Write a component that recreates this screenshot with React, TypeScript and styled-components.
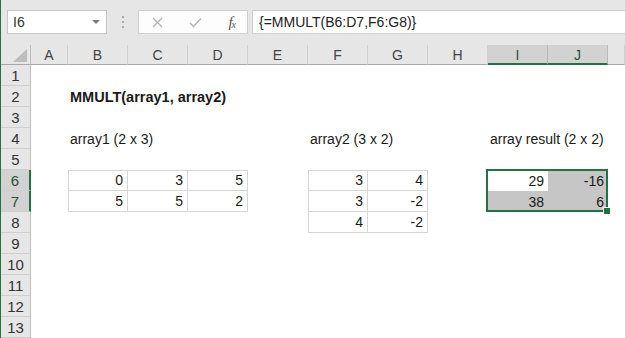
import React from 'react';
import styled, { createGlobalStyle } from 'styled-components';

const GlobalStyle = createGlobalStyle`
  html, body {
    margin: 0;
    padding: 0;
    background: #ffffff;
    overflow: hidden;
  }
  body {
    font-family: 'Liberation Sans', Arial, sans-serif;
  }
`;

const GREEN = '#217346';

const Window = styled.div`
  width: 625px;
  height: 338px;
  box-sizing: border-box;
  border-left: 1px solid ${GREEN};
  display: flex;
  flex-direction: column;
  overflow: hidden;
  background: #ffffff;
`;

const Toolbar = styled.div`
  height: 45px;
  box-sizing: border-box;
  padding: 10px 0 0 6px;
  background: #e6e6e6;
  display: flex;
  align-items: flex-start;
`;

const NameBox = styled.div`
  width: 100px;
  height: 24px;
  box-sizing: border-box;
  border: 1px solid #c6c6c6;
  background: #ffffff;
  display: flex;
  align-items: center;
  justify-content: space-between;
  padding: 0 6px 0 5px;
  font-size: 14px;
  color: #333;
`;

const DropArrow = styled.span`
  width: 0;
  height: 0;
  border-left: 4px solid transparent;
  border-right: 4px solid transparent;
  border-top: 4px solid #7a7a7a;
`;

const Grip = styled.div`
  width: 31px;
  height: 24px;
  display: flex;
  flex-direction: column;
  align-items: center;
  justify-content: center;
  gap: 3px;
  span {
    width: 2px;
    height: 2px;
    background: #a8a8a8;
  }
`;

const FormulaButtons = styled.div`
  width: 110px;
  height: 24px;
  box-sizing: border-box;
  border: 1px solid #d0d0d0;
  background: #fdfdfd;
  display: flex;
  align-items: center;
  justify-content: space-between;
  padding: 0 12px 0 13px;
  margin-right: 4px;
`;

const FxLabel = styled.span`
  font-family: 'Liberation Serif', 'Times New Roman', serif;
  font-style: italic;
  font-size: 15px;
  color: #555;
  letter-spacing: -1px;
  sub {
    font-size: 10px;
    vertical-align: -1px;
  }
`;

const FormulaInput = styled.div`
  flex: 1;
  height: 24px;
  box-sizing: border-box;
  border: 1px solid #d0d0d0;
  border-right: none;
  background: #ffffff;
  display: flex;
  align-items: center;
  padding-left: 6px;
  font-size: 14px;
  color: #222;
`;

const Sheet = styled.div`
  display: grid;
  grid-template-columns: 30px 37px repeat(9, 60px) 1fr;
  grid-template-rows: 20px repeat(13, 21px);
  font-size: 14px;
`;

const Corner = styled.div`
  grid-row: 1;
  grid-column: 1;
  background: #e6e6e6;
  border-right: 1px solid #bdbdbd;
  border-bottom: 1px solid #a8a8a8;
  box-sizing: border-box;
  display: flex;
  align-items: flex-end;
  justify-content: flex-end;
  padding: 0 3px 2px 0;
`;

const ColHeader = styled.div<{ $col: number; $selected?: boolean }>`
  grid-row: 1;
  grid-column: ${(p) => p.$col};
  box-sizing: border-box;
  background: ${(p) => (p.$selected ? '#d2d2d2' : '#e6e6e6')};
  border-right: 1px solid ${(p) => (p.$selected ? '#b8b8b8' : '#cfcfcf')};
  border-bottom: ${(p) => (p.$selected ? `2px solid ${GREEN}` : '1px solid #a8a8a8')};
  display: flex;
  align-items: center;
  justify-content: center;
  padding-top: ${(p) => (p.$selected ? '1px' : '0')};
  color: ${(p) => (p.$selected ? '#2b4f3b' : '#444')};
  font-size: 14px;
`;

const RowHeader = styled.div<{ $row: number; $selected?: boolean }>`
  grid-row: ${(p) => p.$row};
  grid-column: 1;
  box-sizing: border-box;
  background: ${(p) => (p.$selected ? '#d2d2d2' : '#e6e6e6')};
  border-right: ${(p) => (p.$selected ? `2px solid ${GREEN}` : '1px solid #bdbdbd')};
  border-bottom: 1px solid #cfcfcf;
  display: flex;
  align-items: center;
  justify-content: center;
  color: ${(p) => (p.$selected ? '#2b4f3b' : '#333')};
  font-size: 15px;
`;

const Cell = styled.div<{
  $row: number;
  $col: number;
  $align?: 'left' | 'right';
  $bold?: boolean;
  $fill?: boolean;
  $boxed?: boolean;
  $top?: boolean;
  $left?: boolean;
}>`
  grid-row: ${(p) => p.$row};
  grid-column: ${(p) => p.$col};
  box-sizing: border-box;
  display: flex;
  align-items: flex-end;
  justify-content: ${(p) => (p.$align === 'right' ? 'flex-end' : 'flex-start')};
  padding: 0 4px 2px 2px;
  white-space: nowrap;
  overflow: visible;
  color: #1a1a1a;
  font-size: ${(p) => (p.$bold ? '14.5px' : '14px')};
  font-weight: ${(p) => (p.$bold ? 700 : 400)};
  background: ${(p) => (p.$fill ? '#c6c6c6' : 'transparent')};
  border-right: ${(p) => (p.$boxed ? '1px solid #d6d6d6' : 'none')};
  border-bottom: ${(p) => (p.$boxed ? '1px solid #d6d6d6' : 'none')};
  border-top: ${(p) => (p.$top ? '1px solid #d6d6d6' : 'none')};
  border-left: ${(p) => (p.$left ? '1px solid #d6d6d6' : 'none')};
`;

const Selection = styled.div<{ $col: number; $row: number }>`
  grid-column: ${(p) => p.$col} / span 2;
  grid-row: ${(p) => p.$row} / span 2;
  margin: -1px 0 0 -2px;
  border: 2px solid ${GREEN};
  position: relative;
  pointer-events: none;
`;

const FillHandle = styled.span`
  position: absolute;
  right: -5px;
  bottom: -5px;
  width: 6px;
  height: 6px;
  background: ${GREEN};
  border: 1px solid #ffffff;
`;

const COLS = ['A', 'B', 'C', 'D', 'E', 'F', 'G', 'H', 'I', 'J', ''];

type CellData = {
  v: string;
  align?: 'left' | 'right';
  bold?: boolean;
  fill?: boolean;
};

const data: Record<string, CellData> = {
  B2: { v: 'MMULT(array1, array2)', bold: true },
  B4: { v: 'array1 (2 x 3)' },
  F4: { v: 'array2 (3 x 2)' },
  I4: { v: 'array result (2 x 2)' },
  B6: { v: '0', align: 'right' },
  C6: { v: '3', align: 'right' },
  D6: { v: '5', align: 'right' },
  B7: { v: '5', align: 'right' },
  C7: { v: '5', align: 'right' },
  D7: { v: '2', align: 'right' },
  F6: { v: '3', align: 'right' },
  G6: { v: '4', align: 'right' },
  F7: { v: '3', align: 'right' },
  G7: { v: '-2', align: 'right' },
  F8: { v: '4', align: 'right' },
  G8: { v: '-2', align: 'right' },
  I6: { v: '29', align: 'right' },
  J6: { v: '-16', align: 'right', fill: true },
  I7: { v: '38', align: 'right', fill: true },
  J7: { v: '6', align: 'right', fill: true },
};

// bordered ranges: [firstCol, lastCol, firstRow, lastRow]
const boxes: [string, string, number, number][] = [
  ['B', 'D', 6, 7],
  ['F', 'G', 6, 8],
];

const boxInfo = (col: string, row: number) => {
  for (const [c1, c2, r1, r2] of boxes) {
    if (col && col >= c1 && col <= c2 && row >= r1 && row <= r2) {
      return { boxed: true, top: row === r1, left: col === c1 };
    }
  }
  return { boxed: false, top: false, left: false };
};

const CornerMark = () => (
  <svg width="14" height="13" viewBox="0 0 14 13">
    <polygon points="0,13 14,13 14,0" fill="#bdbdbd" />
  </svg>
);

const CrossIcon = () => (
  <svg width="11" height="11" viewBox="0 0 11 11">
    <path d="M1 1 L10 10 M10 1 L1 10" stroke="#b4b4b4" strokeWidth="1.4" fill="none" />
  </svg>
);

const CheckIcon = () => (
  <svg width="13" height="11" viewBox="0 0 13 11">
    <path d="M1 6 L4.5 9.5 L12 1.5" stroke="#b4b4b4" strokeWidth="1.5" fill="none" />
  </svg>
);

export default function App() {
  const rows = Array.from({ length: 13 }, (_, i) => i + 1);
  return (
    <>
      <GlobalStyle />
      <Window>
        <Toolbar>
          <NameBox>
            I6
            <DropArrow />
          </NameBox>
          <Grip>
            <span />
            <span />
            <span />
          </Grip>
          <FormulaButtons>
            <CrossIcon />
            <CheckIcon />
            <FxLabel>
              f<sub>x</sub>
            </FxLabel>
          </FormulaButtons>
          <FormulaInput>{'{=MMULT(B6:D7,F6:G8)}'}</FormulaInput>
        </Toolbar>
        <Sheet>
          <Corner>
            <CornerMark />
          </Corner>
          {COLS.map((c, i) => (
            <ColHeader key={'h' + i} $col={i + 2} $selected={c === 'I' || c === 'J'}>
              {c}
            </ColHeader>
          ))}
          {rows.map((r) => (
            <React.Fragment key={r}>
              <RowHeader $row={r + 1} $selected={r === 6 || r === 7}>
                {r}
              </RowHeader>
              {COLS.map((c, i) => {
                const d = c ? data[c + r] : undefined;
                const b = boxInfo(c, r);
                return (
                  <Cell
                    key={r + '-' + i}
                    $row={r + 1}
                    $col={i + 2}
                    $align={d?.align}
                    $bold={d?.bold}
                    $fill={d?.fill}
                    $boxed={b.boxed}
                    $top={b.top}
                    $left={b.left}
                  >
                    {d?.v}
                  </Cell>
                );
              })}
            </React.Fragment>
          ))}
          <Selection $col={10} $row={7}>
            <FillHandle />
          </Selection>
        </Sheet>
      </Window>
    </>
  );
}
